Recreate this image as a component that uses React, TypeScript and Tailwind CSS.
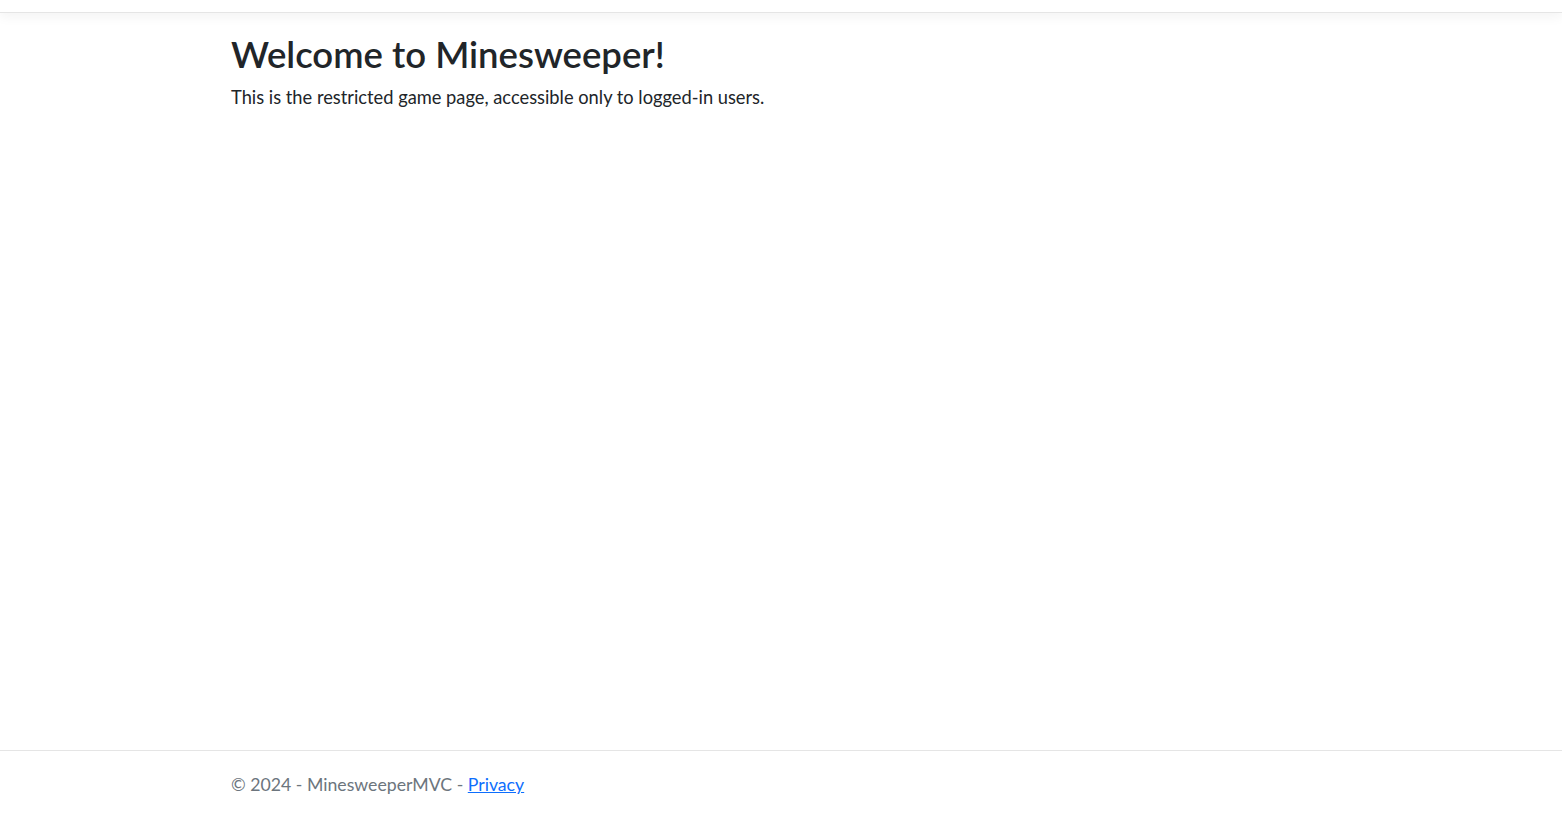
const App = () => {
  return (
    <div
      className="flex h-[818px] flex-col overflow-hidden bg-white text-[#212529]"
      style={{ fontFamily: 'Lato, "Noto Sans", "Liberation Sans", sans-serif' }}
    >
      <header className="h-[13px] shrink-0 border-b border-[#e5e5e5] bg-white shadow-[0_4px_12px_rgba(0,0,0,0.05)]"></header>

      <main className="flex-1 pl-[231px] pt-[17px]">
        <h1 className="mb-[7px] text-[36.5px] font-semibold leading-[48px]">Welcome to Minesweeper!</h1>
        <p className="text-[18.3px] leading-6">This is the restricted game page, accessible only to logged-in users.</p>
      </main>

      <footer className="h-[68px] shrink-0 border-t border-[#e5e5e5] pl-[231px] text-[17.7px] leading-[67px] text-[#6c757d]">
        © 2024 - MinesweeperMVC -{" "}
        <a href="#" className="text-[#0d6efd] underline">
          Privacy
        </a>
      </footer>
    </div>
  );
};

export default App;
